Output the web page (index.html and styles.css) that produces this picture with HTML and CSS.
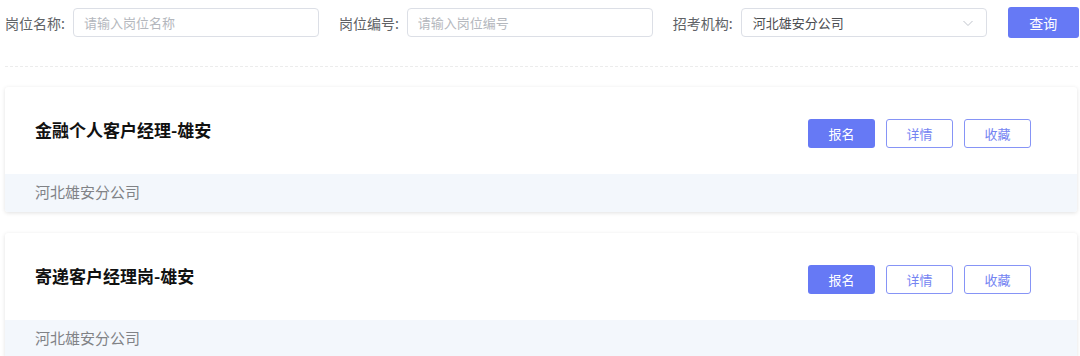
FILE: index.html
```html
<!DOCTYPE html>
<html lang="zh-CN">
<head>
    <meta charset="UTF-8">
    <meta name="viewport" content="width=device-width, initial-scale=1.0">
    <title>岗位查询</title>
    <link rel="stylesheet" href="styles.css">
</head>
<body>
    <div class="search">
        <div class="field">
            <label>岗位名称:</label>
            <input type="text" class="ipt" placeholder="请输入岗位名称">
        </div>
        <div class="field">
            <label>岗位编号:</label>
            <input type="text" class="ipt" placeholder="请输入岗位编号">
        </div>
        <div class="field">
            <label>招考机构:</label>
            <div class="select">
                <span>河北雄安分公司</span>
                <svg class="arrow" width="12" height="12" viewBox="0 0 12 12"><path d="M1.5 4 L6 8.5 L10.5 4" fill="none" stroke="#c0c4cc" stroke-width="1"/></svg>
            </div>
        </div>
        <a href="#" class="btn btn_search">查询</a>
    </div>
    <div class="line"></div>

    <div class="card">
        <div class="card_top">
            <h3>金融个人客户经理-雄安</h3>
            <div class="ops">
                <a href="#" class="btn btn_primary">报名</a>
                <a href="#" class="btn btn_plain">详情</a>
                <a href="#" class="btn btn_plain">收藏</a>
            </div>
        </div>
        <div class="card_foot">河北雄安分公司</div>
    </div>

    <div class="card">
        <div class="card_top">
            <h3>寄递客户经理岗-雄安</h3>
            <div class="ops">
                <a href="#" class="btn btn_primary">报名</a>
                <a href="#" class="btn btn_plain">详情</a>
                <a href="#" class="btn btn_plain">收藏</a>
            </div>
        </div>
        <div class="card_foot">河北雄安分公司</div>
    </div>
</body>
</html>
```

FILE: styles.css
```css
* {
    margin: 0;
    padding: 0;
    box-sizing: border-box;
}
body {
    font-family: "Noto Sans CJK SC", "Noto Sans", sans-serif;
    background: #fff;
    color: #303133;
}
a {
    text-decoration: none;
}
.search {
    display: flex;
    align-items: center;
    padding: 7px 0 0 5px;
    height: 38px;
}
.field {
    display: flex;
    align-items: center;
    margin-right: 20px;
}
.field label {
    font-size: 14px;
    color: #606266;
    margin-right: 8px;
    white-space: nowrap;
}
.ipt {
    width: 246px;
    height: 29px;
    border: 1px solid #dcdfe6;
    border-radius: 4px;
    padding: 0 10px;
    font-family: inherit;
    font-size: 13px;
    color: #606266;
    outline: none;
}
.ipt::placeholder {
    color: #b4b7bd;
}
.select {
    width: 246px;
    height: 29px;
    border: 1px solid #dcdfe6;
    border-radius: 4px;
    padding: 0 12px 0 11px;
    display: flex;
    align-items: center;
    justify-content: space-between;
    font-size: 13px;
    color: #4a4c50;
}
.btn {
    display: inline-flex;
    align-items: center;
    justify-content: center;
    font-size: 13px;
    border-radius: 3px;
}
.btn_search {
    width: 71px;
    height: 31px;
    background: #6679f5;
    color: #fff;
    font-size: 14px;
    margin-left: 1px;
}
.line {
    margin: 28px 2px 0 5px;
    border-top: 1px dashed #ececec;
}
.card {
    margin: 20px 3px 0 5px;
    background: #fff;
    border-radius: 3px;
    box-shadow: 0 1px 4px rgba(0, 0, 0, 0.12);
    overflow: hidden;
}
.card + .card {
    margin-top: 21px;
}
.card_top {
    height: 87px;
    display: flex;
    align-items: center;
    justify-content: space-between;
    padding: 0 46px 0 30px;
}
.card_top h3 {
    font-size: 17px;
    font-weight: bold;
    color: #111;
    margin-top: -3px;
}
.ops {
    display: flex;
    gap: 11px;
    margin-top: 5px;
}
.ops .btn {
    width: 67px;
    height: 29px;
}
.btn_primary {
    background: #6679f5;
    color: #fff;
}
.btn_plain {
    border: 1px solid #8694f6;
    color: #7584f2;
    background: #fff;
}
.card_foot {
    height: 38px;
    line-height: 36px;
    background: #f3f7fc;
    padding-left: 30px;
    font-size: 15px;
    color: #808286;
}
```
